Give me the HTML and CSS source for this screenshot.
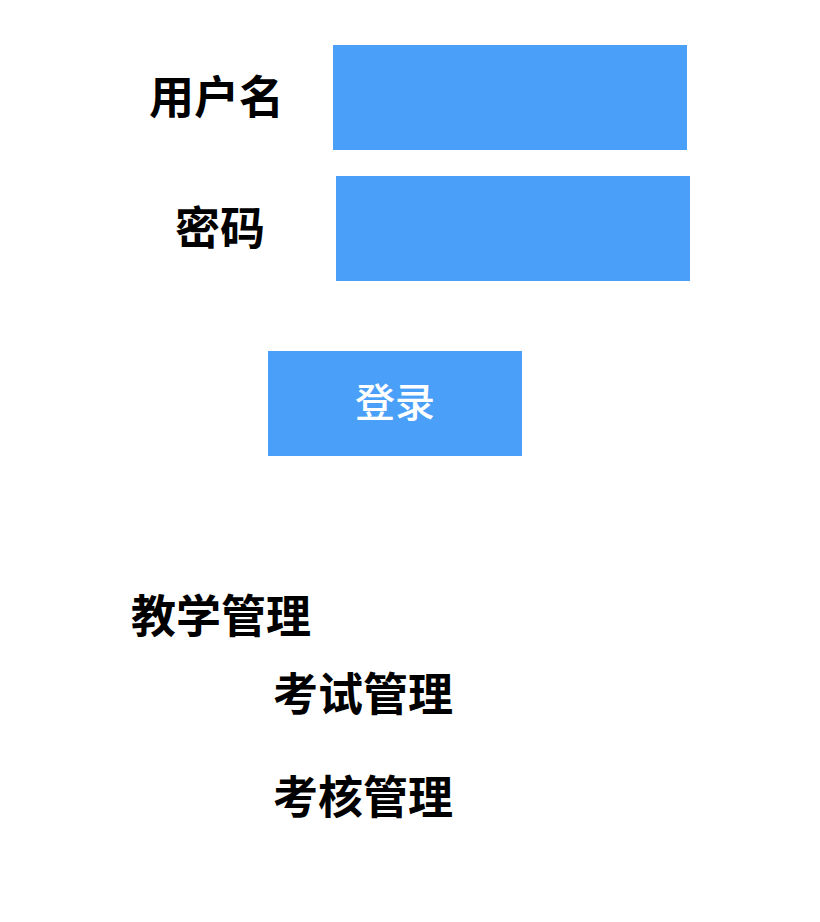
FILE: index.html
```html
<!DOCTYPE html>
<html lang="zh-CN">
<head>
<meta charset="UTF-8">
<meta name="viewport" content="width=device-width, initial-scale=1.0">
<title>登录</title>
<link rel="stylesheet" href="styles.css">
</head>
<body>

<div class="form">
    <div class="row row-user">
        <label class="label" for="username">用户名</label>
        <input class="field" id="username" type="text">
    </div>
    <div class="row row-pass">
        <label class="label" for="password">密码</label>
        <input class="field" id="password" type="password">
    </div>
    <button class="login">登录</button>
</div>

<div class="menu">
    <div class="menu-title">教学管理</div>
    <div class="menu-item">考试管理</div>
    <div class="menu-item">考核管理</div>
</div>

</body>
</html>
```

FILE: styles.css
```css
body {
    margin: 0;
    background-color: #fff;
    font-family: "Noto Sans CJK SC", "Noto Sans", sans-serif;
    color: #000;
}
.form {
    padding-top: 45px;
}
.row {
    display: flex;
    align-items: center;
}
.row-user {
    padding-left: 149px;
}
.row-pass {
    margin-top: 26px;
    padding-left: 175px;
}
.label {
    font-size: 45px;
    font-weight: bold;
    line-height: 60px;
    padding-bottom: 6px;
}
.row-user .label {
    margin-right: 49px;
}
.row-pass .label {
    margin-right: 71px;
}
.field {
    width: 354px;
    height: 105px;
    border: none;
    padding: 0;
    margin: 0;
    background-color: #4a9ff9;
    outline: none;
}
.login {
    display: block;
    margin: 70px 0 0 268px;
    width: 254px;
    height: 105px;
    border: none;
    padding: 0 0 8px;
    background-color: #4a9ff9;
    color: #fff;
    font-family: inherit;
    font-size: 40px;
    font-weight: 500;
    cursor: pointer;
}
.menu {
    padding-top: 128px;
}
.menu-title,
.menu-item {
    font-size: 45px;
    font-weight: bold;
    line-height: 60px;
}
.menu-title {
    padding-left: 131px;
}
.menu-item {
    padding-left: 273px;
    margin-top: 18px;
}
.menu-item + .menu-item {
    margin-top: 43px;
}
```
